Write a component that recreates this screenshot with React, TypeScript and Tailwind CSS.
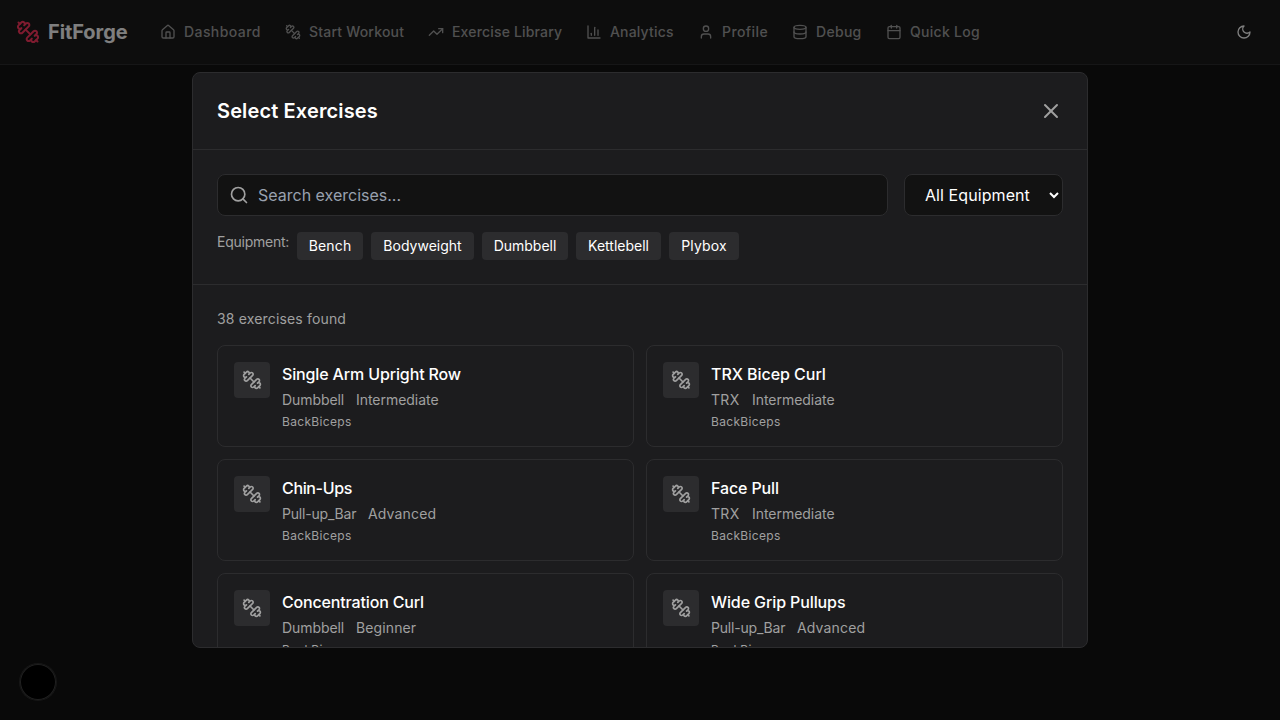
import type { ReactNode } from "react";
import { Calendar, Database, House, Search, TrendingUp, User, X } from "lucide-react";

function Dumbbell({ className }: { className: string }) {
  return (
    <svg viewBox="0 0 24 24" fill="none" stroke="currentColor" strokeWidth="2" strokeLinecap="round" strokeLinejoin="round" className={className}>
      <path d="M14.4 14.4 9.6 9.6" />
      <path d="M18.657 21.485a2 2 0 1 1-2.829-2.828l-1.767 1.768a2 2 0 1 1-2.829-2.829l6.364-6.364a2 2 0 1 1 2.829 2.829l-1.768 1.767a2 2 0 1 1 2.828 2.829z" />
      <path d="m21.5 21.5-1.4-1.4" />
      <path d="M3.9 3.9 2.5 2.5" />
      <path d="M6.404 12.768a2 2 0 1 1-2.829-2.829l1.768-1.767a2 2 0 1 1-2.828-2.829l2.828-2.828a2 2 0 1 1 2.829 2.828l1.767-1.768a2 2 0 1 1 2.829 2.829z" />
    </svg>
  );
}

function Moon() {
  return (
    <svg viewBox="0 0 24 24" fill="none" stroke="currentColor" strokeWidth="2" strokeLinecap="round" strokeLinejoin="round" className="size-4">
      <path d="M12 3a6 6 0 0 0 9 9 9 9 0 1 1-9-9Z" />
    </svg>
  );
}

function BarChart() {
  return (
    <svg viewBox="0 0 24 24" fill="none" stroke="currentColor" strokeWidth="2" strokeLinecap="round" strokeLinejoin="round" className="size-4">
      <path d="M3 3v18h18" />
      <path d="M18 17V9" />
      <path d="M13 17V5" />
      <path d="M8 17v-3" />
    </svg>
  );
}

const links: { label: string; icon: ReactNode; fit: string }[] = [
  { label: "Dashboard", icon: <House className="size-4" />, fit: "w-[77px] tracking-[0.42px]" },
  { label: "Start Workout", icon: <Dumbbell className="size-4" />, fit: "w-[95px] tracking-[0.2px]" },
  { label: "Exercise Library", icon: <TrendingUp className="size-4" />, fit: "w-[110px] tracking-[0.17px]" },
  { label: "Analytics", icon: <BarChart />, fit: "w-[64px] tracking-[0.17px]" },
  { label: "Profile", icon: <User className="size-4" />, fit: "w-[46px] tracking-[0.42px]" },
  { label: "Debug", icon: <Database className="size-4" />, fit: "w-[46px] tracking-[0.3px]" },
  { label: "Quick Log", icon: <Calendar className="size-4" />, fit: "w-[70px] tracking-[0.28px]" },
];

const equipment = [
  { name: "Bench", fit: "w-[66px] tracking-[0.15px]" },
  { name: "Bodyweight", fit: "w-[103px]" },
  { name: "Dumbbell", fit: "w-[86px]" },
  { name: "Kettlebell", fit: "w-[85px]" },
  { name: "Plybox", fit: "w-[70px] tracking-[0.15px]" },
];

type Exercise = { name: string; nameFit: string; gear: string; level: string };

const exercises: Exercise[] = [
  { name: "Single Arm Upright Row", nameFit: "tracking-[-0.14px]", gear: "Dumbbell", level: "Intermediate" },
  { name: "TRX Bicep Curl", nameFit: "tracking-[-0.05px]", gear: "TRX", level: "Intermediate" },
  { name: "Chin-Ups", nameFit: "tracking-[-0.35px]", gear: "Pull-up_Bar", level: "Advanced" },
  { name: "Face Pull", nameFit: "tracking-[-0.12px]", gear: "TRX", level: "Intermediate" },
  { name: "Concentration Curl", nameFit: "tracking-[-0.16px]", gear: "Dumbbell", level: "Beginner" },
  { name: "Wide Grip Pullups", nameFit: "tracking-[-0.11px]", gear: "Pull-up_Bar", level: "Advanced" },
];

const gearFit: Record<string, string> = {
  Dumbbell: "w-[62px] tracking-[-0.08px]",
  TRX: "w-[29px] tracking-[0.3px]",
  "Pull-up_Bar": "w-[74px] tracking-[-0.2px]",
};

const levelFit: Record<string, string> = {
  Intermediate: "tracking-[-0.04px]",
  Advanced: "tracking-[0.15px]",
  Beginner: "tracking-[0.12px]",
};

function Header() {
  return (
    <header className="flex h-[65px] items-center border-b border-[#2c2c2e] bg-[#1a1a1a] px-4">
      <div className="flex items-center gap-2">
        <Dumbbell className="size-6 text-[#ff375f]" />
        <span className="w-20 text-xl font-bold tracking-[-0.08px] whitespace-nowrap text-white">FitForge</span>
      </div>
      <nav className="ml-8 flex items-center gap-6 text-sm font-medium text-[#a0a0a0]">
        {links.map((link) => (
          <a key={link.label} className="flex items-center gap-2">
            {link.icon}
            <span className={`whitespace-nowrap ${link.fit}`}>{link.label}</span>
          </a>
        ))}
      </nav>
      <button className="ml-auto flex size-10 items-center justify-center text-white">
        <Moon />
      </button>
    </header>
  );
}

function ExerciseCard({ name, nameFit, gear, level }: Exercise) {
  return (
    <article className="flex h-[102px] items-start gap-3 rounded-lg border border-[#2c2c2e] p-4">
      <div className="flex size-9 shrink-0 items-center justify-center rounded bg-[#2c2c2e] text-[#a0a0a0]">
        <Dumbbell className="size-5" />
      </div>
      <div>
        <h3 className={`font-medium whitespace-nowrap text-white ${nameFit}`}>{name}</h3>
        <div className="mt-1 flex gap-3 text-sm whitespace-nowrap text-[#a0a0a0]">
          <span className={gearFit[gear]}>{gear}</span>
          <span className={levelFit[level]}>{level}</span>
        </div>
        <div className="mt-1 flex text-xs tracking-[0.33px] text-[#a0a0a0]">
          <span>Back</span>
          <span>Biceps</span>
        </div>
      </div>
    </article>
  );
}

function ExerciseDialog() {
  return (
    <section className="flex h-[576px] w-[896px] flex-col overflow-hidden rounded-lg border border-[#2c2c2e] bg-[#1c1c1e]">
      <div className="flex h-[77px] shrink-0 items-center justify-between border-b border-[#2c2c2e] px-6">
        <h2 className="text-xl font-semibold tracking-[0.14px] text-white">Select Exercises</h2>
        <X className="size-6 text-[#a0a0a0]" />
      </div>
      <div className="h-[135px] shrink-0 border-b border-[#2c2c2e] p-6">
        <div className="flex gap-4">
          <label className="flex h-[42px] flex-1 items-center gap-[9px] rounded-lg border border-[#2c2c2e] bg-[#121212] px-[11px]">
            <Search className="size-5 text-[#a0a0a0]" />
            <input placeholder="Search exercises..." className="min-w-0 flex-1 bg-transparent text-white placeholder:text-gray-400" />
          </label>
          <select className="h-[42px] w-[159px] rounded-lg border border-[#2c2c2e] bg-[#121212] px-4 tracking-[0.08px] text-white">
            <option>All Equipment</option>
          </select>
        </div>
        <div className="mt-4 flex gap-2 text-sm">
          <span className="w-[72px] tracking-[-0.25px] whitespace-nowrap text-[#a0a0a0]">Equipment:</span>
          {equipment.map((item) => (
            <button key={item.name} className={`h-7 rounded bg-[#2c2c2e] text-center whitespace-nowrap text-white ${item.fit}`}>
              {item.name}
            </button>
          ))}
        </div>
      </div>
      <div className="min-h-0 flex-1 overflow-hidden p-6">
        <p className="mb-4 text-sm tracking-[0.16px] text-[#a0a0a0]">38 exercises found</p>
        <div className="grid grid-cols-2 gap-3">
          {exercises.map((exercise) => (
            <ExerciseCard key={exercise.name} {...exercise} />
          ))}
        </div>
      </div>
    </section>
  );
}

export default function App() {
  return (
    <div className="relative h-[720px] overflow-hidden bg-[#121212] font-['Inter',sans-serif]">
      <Header />
      <div className="absolute inset-0 flex items-center justify-center bg-black/50">
        <ExerciseDialog />
      </div>
      <div className="absolute bottom-5 left-5 size-9 rounded-full bg-black shadow-[0_0_0_1px_#171717,inset_0_0_0_1px_#202020]" />
    </div>
  );
}
